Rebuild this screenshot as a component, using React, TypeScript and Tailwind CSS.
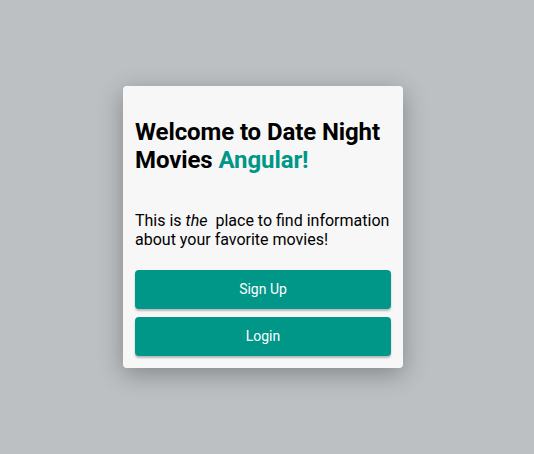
export default function App() {
  return (
    <div className="min-h-[454px] w-full bg-[#bcc0c3] flex items-center justify-center pr-2 font-['Roboto',sans-serif]">
      <div className="w-[280px] h-[282px] bg-[#f7f7f7] rounded-[4px] shadow-[0_6px_24px_rgba(0,0,0,0.3)] px-3 pt-8 pb-3 flex flex-col">
        <h1 className="text-[24px] leading-[28px] font-bold text-black tracking-[-0.1px]">
          Welcome to Date Night Movies <span className="text-[#009688]">Angular!</span>
        </h1>
        <p className="mt-[37px] text-[16px] leading-[19px] text-black">
          This is <i className="mr-[4px]">the</i> place to find information about your favorite movies!
        </p>
        <div className="mt-auto flex flex-col gap-2">
          <button className="h-[39px] w-full rounded-[4px] bg-[#009688] text-white text-[14px] font-normal shadow-[0_2px_2px_rgba(0,0,0,0.25)]">
            Sign Up
          </button>
          <button className="h-[39px] w-full rounded-[4px] bg-[#009688] text-white text-[14px] font-normal shadow-[0_2px_2px_rgba(0,0,0,0.25)]">
            Login
          </button>
        </div>
      </div>
    </div>
  );
}
